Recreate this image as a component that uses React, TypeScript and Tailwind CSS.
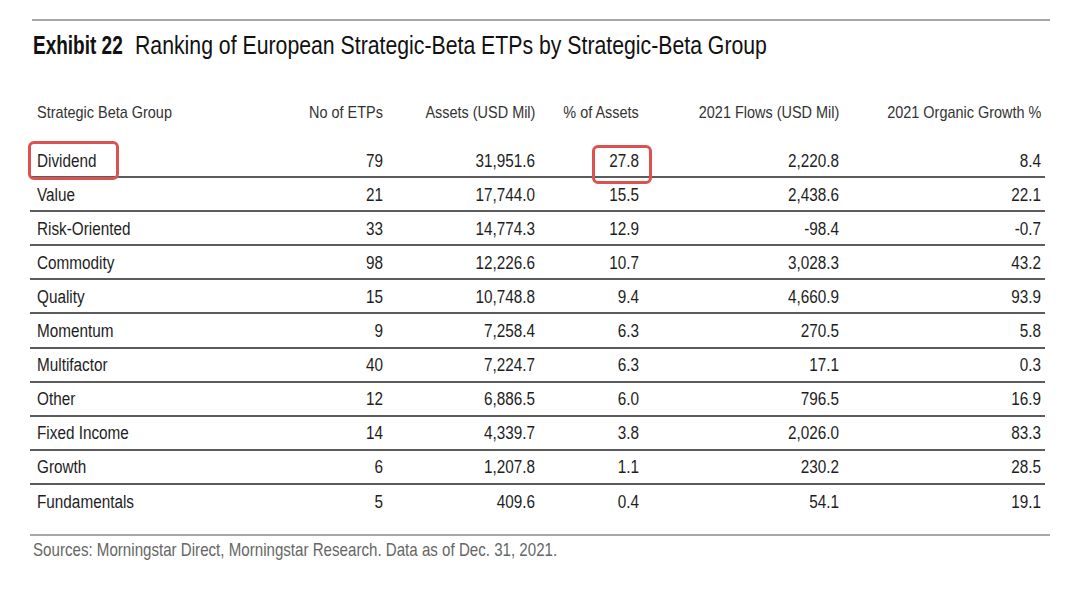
import type { ReactNode } from 'react';

const rows: [string, string, string, string, string, string][] = [
  ['Dividend', '79', '31,951.6', '27.8', '2,220.8', '8.4'],
  ['Value', '21', '17,744.0', '15.5', '2,438.6', '22.1'],
  ['Risk-Oriented', '33', '14,774.3', '12.9', '-98.4', '-0.7'],
  ['Commodity', '98', '12,226.6', '10.7', '3,028.3', '43.2'],
  ['Quality', '15', '10,748.8', '9.4', '4,660.9', '93.9'],
  ['Momentum', '9', '7,258.4', '6.3', '270.5', '5.8'],
  ['Multifactor', '40', '7,224.7', '6.3', '17.1', '0.3'],
  ['Other', '12', '6,886.5', '6.0', '796.5', '16.9'],
  ['Fixed Income', '14', '4,339.7', '3.8', '2,026.0', '83.3'],
  ['Growth', '6', '1,207.8', '1.1', '230.2', '28.5'],
  ['Fundamentals', '5', '409.6', '0.4', '54.1', '19.1'],
];

// condensed look: the source face is a narrow grotesque, so squeeze Liberation Sans
function L({ children }: { children: ReactNode }) {
  return <span className="inline-block origin-left scale-x-[0.85] whitespace-nowrap">{children}</span>;
}

function R({ children }: { children: ReactNode }) {
  return <span className="inline-block origin-right scale-x-[0.85] whitespace-nowrap">{children}</span>;
}

export default function App() {
  return (
    <div className="min-h-screen w-[1080px] bg-white font-['Liberation_Sans',Arial,sans-serif] text-[#1e1e1e]">
      <div className="ml-[30px] w-[1020px] pt-[19px]">
        {/* top rule */}
        <div className="ml-[2px] h-[2px] bg-[#a8a8a8]" />

        <h1 className="mt-[11px] flex items-baseline pl-[3px] text-[25px] leading-[26px] text-[#111]">
          <span className="w-[102px] shrink-0">
            <span className="inline-block origin-left scale-x-[0.76] whitespace-nowrap font-bold">Exhibit 22</span>
          </span>
          <L>Ranking of European Strategic-Beta ETPs by Strategic-Beta Group</L>
        </h1>

        <div className="w-[1015px]">
          {/* header */}
          <div className="mt-[37px] flex h-[36px] items-center text-[17px] text-[#333]">
            <div className="w-[253px] pl-[7px]"><L>Strategic Beta Group</L></div>
            <div className="w-[100px] text-right"><R>No of ETPs</R></div>
            <div className="w-[152px] text-right"><R>Assets (USD Mil)</R></div>
            <div className="w-[104px] text-right"><R>% of Assets</R></div>
            <div className="w-[200px] text-right"><R>2021 Flows (USD Mil)</R></div>
            <div className="w-[202px] text-right"><R>2021 Organic Growth %</R></div>
          </div>

          {/* body */}
          <div className="mt-[13px]">
            {rows.map((r, i) => (
              <div
                key={r[0]}
                className={
                  i < rows.length - 1
                    ? 'flex h-[34.1px] items-center border-b-2 border-[#5c5c5c] pt-[2px] text-[18px]'
                    : 'flex h-[34.1px] items-center pt-[2px] text-[18px]'
                }
              >
                <div className="relative w-[253px] pl-[7px]">
                  {i === 0 && (
                    <span className="absolute left-[-2px] top-[-7px] h-[39px] w-[91px] rounded-[6px] border-[3px] border-[#dc5252]" />
                  )}
                  <L>{r[0]}</L>
                </div>
                <div className="w-[100px] text-right"><R>{r[1]}</R></div>
                <div className="w-[152px] text-right"><R>{r[2]}</R></div>
                <div className="relative w-[104px] text-right">
                  {i === 0 && (
                    <span className="absolute right-[-13px] top-[-3px] h-[39px] w-[60px] rounded-[6px] border-[3px] border-[#dc5252]" />
                  )}
                  <R>{r[3]}</R>
                </div>
                <div className="w-[200px] text-right"><R>{r[4]}</R></div>
                <div className="w-[202px] text-right"><R>{r[5]}</R></div>
              </div>
            ))}
          </div>
        </div>

        {/* bottom rule + source */}
        <div className="mt-[15px] h-[2px] bg-[#a8a8a8]" />
        <p className="mt-[4px] pl-[3px] text-[17.8px] leading-[20px] text-[#666]">
          <L>Sources: Morningstar Direct, Morningstar Research. Data as of Dec. 31, 2021.</L>
        </p>
      </div>
    </div>
  );
}
